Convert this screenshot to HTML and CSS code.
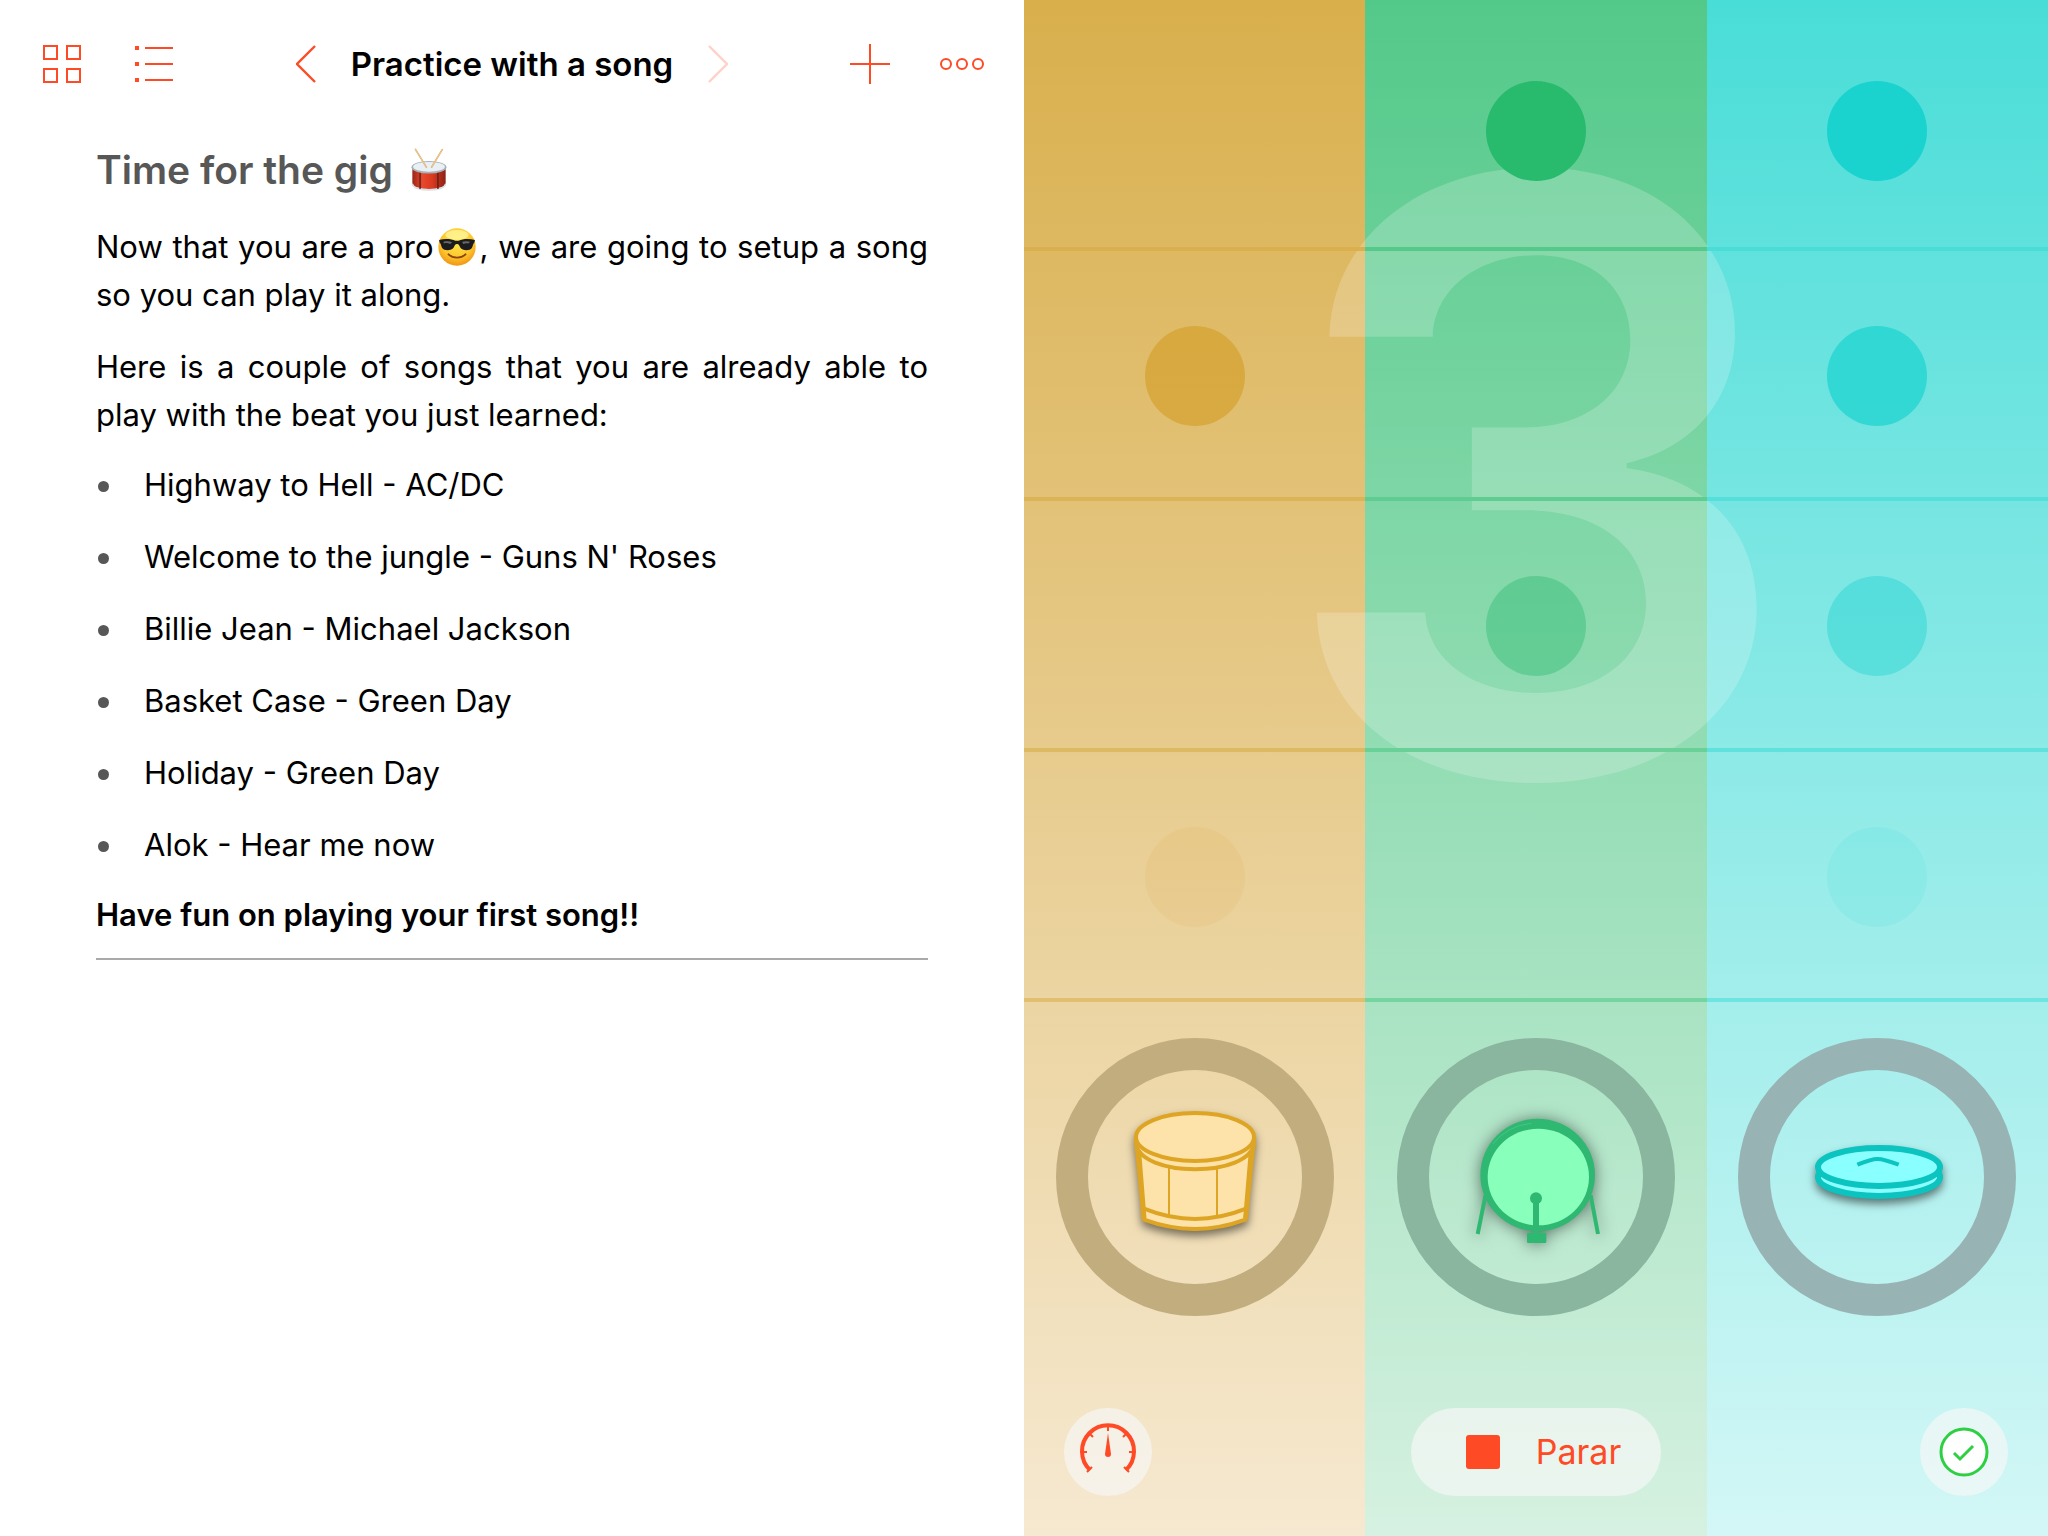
FILE: index.html
```html
<!DOCTYPE html>
<html lang="en">
<head>
<meta charset="utf-8">
<meta name="viewport" content="width=device-width, initial-scale=1">
<title>Practice with a song</title>
<link rel="stylesheet" href="styles.css">
</head>
<body>
<div class="app">
  <section class="lesson">
    <header class="topbar">
      <div class="topbar-group">
        <button class="icon-button" type="button" aria-label="Pages">
          <svg width="38" height="38" viewBox="0 0 38 38" fill="none" stroke="currentColor" stroke-width="2"><path d="M1 1h13v13H1zM24 1h13v13H24zM1 24h13v13H1zM24 24h13v13H24z"/></svg>
        </button>
        <button class="icon-button" type="button" aria-label="Contents">
          <svg width="38" height="38" viewBox="0 0 38 38" fill="currentColor"><path d="M0 1h4v4H0zM0 17h4v4H0zM0 33h4v4H0zM10 2h28v2H10zM10 18h28v2H10zM10 34h28v2H10z"/></svg>
        </button>
      </div>
      <div class="topbar-title">
        <button class="icon-button" type="button" aria-label="Previous page">
          <svg width="20" height="38" viewBox="0 0 20 38" fill="none" stroke="currentColor" stroke-width="2.4"><path d="M19 1 1 19l18 18"/></svg>
        </button>
        <h1 class="title">Practice with a song</h1>
        <button class="icon-button" type="button" aria-label="Next page" disabled>
          <svg width="20" height="38" viewBox="0 0 20 38" fill="none" stroke="currentColor" stroke-width="2.4"><path d="m1 1 18 18L1 37"/></svg>
        </button>
      </div>
      <div class="topbar-group topbar-group-end">
        <button class="icon-button" type="button" aria-label="Add">
          <svg width="40" height="40" viewBox="0 0 40 40" fill="currentColor"><path d="M19 0h2v40h-2z"/><path d="M0 19h40v2H0z"/></svg>
        </button>
        <button class="icon-button" type="button" aria-label="More">
          <svg width="44" height="12" viewBox="0 0 44 12" fill="none" stroke="currentColor" stroke-width="2"><circle cx="6" cy="6" r="5"/><circle cx="22" cy="6" r="5"/><circle cx="38" cy="6" r="5"/></svg>
        </button>
      </div>
    </header>

    <article class="prose">
      <h2 class="heading">Time for the gig
        <svg class="drum-emoji" viewBox="0 0 108 130" role="img" aria-label="drum">
          <defs>
            <linearGradient id="drum-shell"><stop offset="0" stop-color="#9d2617"/><stop offset=".3" stop-color="#e8482c"/><stop offset=".6" stop-color="#d93a20"/><stop offset="1" stop-color="#8f2013"/></linearGradient>
          </defs>
          <path d="M3 60v48c0 26 102 26 102 0V60z" fill="#c3c9cd"/>
          <path d="M4 64v42c0 24 100 24 100 0V64z" fill="url(#drum-shell)"/>
          <path d="M4 108c0 25 100 25 100 0" fill="none" stroke="#dde1e4" stroke-width="5"/>
          <path d="M27 70v54M81 70v54" stroke="#5b1d16" stroke-width="4"/>
          <ellipse cx="54" cy="58" rx="53" ry="19" fill="#a9b1b8"/>
          <ellipse cx="54" cy="57" rx="48" ry="15" fill="#e9f0f5"/>
          <path d="m13 4 33 54M94 5 62 58" stroke="#d8a868" stroke-width="5" stroke-linecap="round"/>
          <path d="m13 4 33 54M94 5 62 58" stroke="#f7dca8" stroke-width="2" stroke-linecap="round"/>
        </svg>
      </h2>
      <p class="text">Now that you are a pro<svg class="cool-emoji" viewBox="0 0 110 110" role="img" aria-label="cool">
          <defs>
            <radialGradient id="cool-face" cx=".5" cy=".35" r=".68"><stop offset="0" stop-color="#ffe94f"/><stop offset=".6" stop-color="#fec92e"/><stop offset="1" stop-color="#ef8f12"/></radialGradient>
          </defs>
          <circle cx="55" cy="55" r="54" fill="url(#cool-face)"/>
          <ellipse cx="55" cy="20" rx="34" ry="14" fill="#fff9a8" opacity=".7"/>
          <path d="M3 35c18-5 36-3 47 2h10c11-5 29-7 47-2l-2 8c-4 2-3 9-7 15-6 9-28 8-33-1-3-5-4-11-10-11s-7 6-10 11c-5 9-27 10-33 1-4-6-3-13-7-15z" fill="#1c1c1e"/>
          <path d="M16 40c8-2 18-2 25 1l-6 5c-6-3-12-3-18-1zM70 40c8-2 16-2 23 0l-5 5c-6-2-10-1-15 1z" fill="#686a6e"/>
          <path d="M30 76c14 13 36 13 50 0" fill="none" stroke="#8a4510" stroke-width="5" stroke-linecap="round"/>
        </svg>, we are going to setup a song so you can play it along.</p>
      <p class="text">Here is a couple of songs that you are already able to play with the beat you just learned:</p>
      <ul class="songs">
        <li class="song">Highway to Hell - AC/DC</li>
        <li class="song">Welcome to the jungle - Guns N' Roses</li>
        <li class="song">Billie Jean - Michael Jackson</li>
        <li class="song">Basket Case - Green Day</li>
        <li class="song">Holiday - Green Day</li>
        <li class="song">Alok - Hear me now</li>
      </ul>
      <p class="closing">Have fun on playing your first song!!</p>
      <hr class="rule">
    </article>
  </section>

  <main class="stage">
    <div class="count">3</div>

    <section class="lane lane-snare" aria-label="Snare">
      <div class="beat beat-1"></div>
      <div class="beat beat-2"><span class="note"></span></div>
      <div class="beat beat-3"></div>
      <div class="beat beat-4"><span class="note"></span></div>
      <div class="pad">
        <button class="ring" type="button" aria-label="Play snare">
          <svg class="instrument" viewBox="-15 21 600 540" fill="#fde3a9" stroke="#dda523" stroke-width="12">
            <path d="M108 180 132 419Q285 475 436 419L462 180Z" stroke-linejoin="round"/>
            <path d="M207 262v146M351 262v146" stroke-width="6"/>
            <path d="m114 190 18 225M456 190l-19 225" stroke-width="15"/>
            <path d="M132 386Q285 448 438 386" fill="none"/>
            <path d="M108 188c8 106 346 106 354 0" fill="#fde3a9"/>
            <ellipse cx="285" cy="171" rx="177" ry="72"/>
          </svg>
        </button>
        <button class="round-button round-button-start" type="button" aria-label="Tempo">
          <svg width="60" height="60" viewBox="-30 -30 60 60" fill="none" stroke="currentColor">
            <path d="M-18 18A26 26 0 1 1 18 18" stroke-width="4"/>
            <path d="M-21 20-16 15M21 20 16 15M-26 0h5M26 0h-5M0-26v5M-18-18l3 3M18-18l-3 3" stroke-width="2"/>
            <path d="M0-19-3 2a3 3 0 0 0 6 0z" fill="currentColor" stroke="none"/>
          </svg>
        </button>
      </div>
    </section>

    <section class="lane lane-bass" aria-label="Bass drum">
      <div class="beat beat-1"><span class="note"></span></div>
      <div class="beat beat-2"></div>
      <div class="beat beat-3"><span class="note"></span></div>
      <div class="beat beat-4"></div>
      <div class="pad">
        <button class="ring" type="button" aria-label="Play bass drum">
          <svg class="instrument instrument-glow" viewBox="-12 21 600 540" fill="none" stroke="#2fb872">
            <ellipse cx="293" cy="285" rx="172" ry="169" fill="#2fb872" stroke="none"/>
            <ellipse cx="295" cy="291" rx="152" ry="145" fill="#89ffbc" stroke="none"/>
            <path d="M158 192Q202 137 274 130" stroke="#4bcf8b" stroke-width="2"/>
            <path d="m137 344-24 118M452 346l22 116" stroke-width="12"/>
            <path d="M288 355v105" stroke-width="18"/>
            <circle cx="288" cy="355" r="18" fill="#2fb872" stroke="none"/>
            <rect x="261" y="458" width="58" height="31" rx="4" fill="#2fb872" stroke="none"/>
          </svg>
        </button>
        <button class="stop-button" type="button"><span class="stop-icon"></span>Parar</button>
      </div>
    </section>

    <section class="lane lane-hat" aria-label="Hi-hat">
      <div class="beat beat-1"><span class="note"></span></div>
      <div class="beat beat-2"><span class="note"></span></div>
      <div class="beat beat-3"><span class="note"></span></div>
      <div class="beat beat-4"><span class="note"></span></div>
      <div class="pad">
        <button class="ring" type="button" aria-label="Play hi-hat">
          <svg class="instrument" viewBox="-9 -69 600 540" fill="#89ffff" stroke="#0bc3bf" stroke-width="18">
            <ellipse cx="297" cy="201" rx="183" ry="57"/>
            <ellipse cx="297" cy="171" rx="183" ry="57"/>
            <path d="M232 164C288 141 296 141 356 164" fill="none" stroke-width="12"/>
          </svg>
        </button>
        <button class="round-button round-button-end" type="button" aria-label="Done">
          <svg width="50" height="50" viewBox="-25 -25 50 50" fill="none" stroke="#2fcf43">
            <circle r="23" fill="#fff" stroke-width="3"/>
            <path d="m-10 1 6 6L9-6" stroke-width="3"/>
          </svg>
        </button>
      </div>
    </section>
  </main>
</div>
</body>
</html>
```
FILE: styles.css
```css
* {
  box-sizing: border-box;
}

body {
  margin: 0;
  background: #fff;
  color: #000;
  font-family: Inter, "Liberation Sans", sans-serif;
  font-size: 31px;
  line-height: 48px;
}

button {
  margin: 0;
  padding: 0;
  border: 0;
  background: none;
  color: #ff4a26;
  font: inherit;
}

svg {
  display: block;
}

.app {
  display: grid;
  grid-template-columns: repeat(2, minmax(0, 1fr));
  min-height: 100vh;
}

/* Lesson text */

.topbar {
  display: grid;
  grid-template-columns: 1fr auto 1fr;
  align-items: center;
  height: 128px;
  padding: 0 40px;
}

.topbar-group {
  display: flex;
  align-items: center;
  gap: 54px;
  padding-left: 3px;
}

.topbar-group-end {
  justify-content: flex-end;
  gap: 50px;
}

.topbar-title {
  display: flex;
  align-items: center;
  gap: 35px;
}

.icon-button:disabled {
  opacity: 0.25;
}

.title {
  margin: 0;
  font-size: 33px;
  font-weight: 600;
}

.prose {
  padding: 18px 96px 48px;
}

.heading {
  margin: 0 0 29px;
  color: #575757;
  font-size: 39px;
  font-weight: 600;
}

.drum-emoji,
.cool-emoji {
  display: inline-block;
}

.drum-emoji {
  width: 36px;
  height: 43px;
  margin-left: 8px;
  vertical-align: -7px;
}

.cool-emoji {
  width: 38px;
  height: 38px;
  margin: 0 4px;
  vertical-align: -8px;
}

.text {
  margin: 0 0 24px;
  text-align: justify;
}

.songs {
  display: grid;
  gap: 24px;
  margin: -2px 0 22px;
  padding: 0;
  list-style: none;
}

.song {
  display: flex;
  align-items: center;
}

.song::before {
  content: "";
  width: 11px;
  height: 11px;
  margin: 2px 35px 0 2px;
  border-radius: 50%;
  background: #575757;
}

.closing {
  margin: 0 0 19px;
  font-weight: 600;
}

.rule {
  height: 2px;
  margin: 0;
  border: 0;
  background: #aaa;
}

/* Drum lanes */

.stage {
  position: relative;
  display: grid;
  grid-template-columns: repeat(3, minmax(0, 1fr));
}

.lane {
  display: grid;
  grid-template-rows: repeat(4, minmax(140px, 1fr)) auto;
  background: linear-gradient(var(--top), var(--bottom));
}

.lane-snare {
  --top: #d9af4c;
  --bottom: #f6e9d1;
  --note: #d4a12e;
  --ring: #c2ad7f;
}

.lane-bass {
  --top: #53c989;
  --bottom: #d6f1e1;
  --note: #28ba6d;
  --ring: #8ab59e;
}

.lane-hat {
  --top: #49ddd8;
  --bottom: #d3f7f6;
  --note: #1ad3cf;
  --ring: #98b3b3;
}

.count {
  position: absolute;
  inset: 0 0 auto;
  color: rgba(255, 255, 255, 0.2);
  font-size: 824px;
  font-weight: 600;
  line-height: 952px;
  text-align: center;
  pointer-events: none;
}

.beat {
  z-index: 1;
  display: flex;
  align-items: center;
  justify-content: center;
  padding-top: 4px;
  border-bottom: 4px solid color-mix(in srgb, var(--bottom) var(--fade), var(--top));
}

.beat-1 {
  --fade: 1%;
  --strength: 1;
  padding-top: 16px;
}

.beat-2 {
  --fade: 9%;
  --strength: 0.7;
}

.beat-3 {
  --fade: 17%;
  --strength: 0.4;
}

.beat-4 {
  --fade: 27%;
  --strength: 0.1;
}

.note {
  width: 100px;
  height: 100px;
  border-radius: 50%;
  background: var(--note);
  opacity: var(--strength);
}

.pad {
  z-index: 1;
  display: flex;
  flex-direction: column;
  align-items: center;
  gap: 92px;
  padding: 36px 0 40px;
}

.ring {
  display: grid;
  place-items: center;
  width: 278px;
  height: 278px;
  border: 32px solid var(--ring);
  border-radius: 50%;
}

.instrument {
  width: 200px;
  height: 180px;
  filter: drop-shadow(0 5px 4px rgba(0, 0, 0, 0.5));
}

.instrument-glow {
  filter: drop-shadow(0 1px 8px rgba(0, 0, 0, 0.5));
}

.round-button,
.stop-button {
  display: flex;
  align-items: center;
  justify-content: center;
  height: 88px;
  border-radius: 44px;
  background: rgba(248, 248, 248, 0.65);
}

.round-button {
  width: 88px;
}

.round-button-start {
  align-self: flex-start;
  margin-left: 40px;
}

.round-button-end {
  align-self: flex-end;
  margin-right: 40px;
}

.stop-button {
  gap: 36px;
  padding: 0 40px 0 55px;
  font-size: 34px;
}

.stop-icon {
  width: 34px;
  height: 34px;
  border-radius: 3px;
  background: currentColor;
}
```
